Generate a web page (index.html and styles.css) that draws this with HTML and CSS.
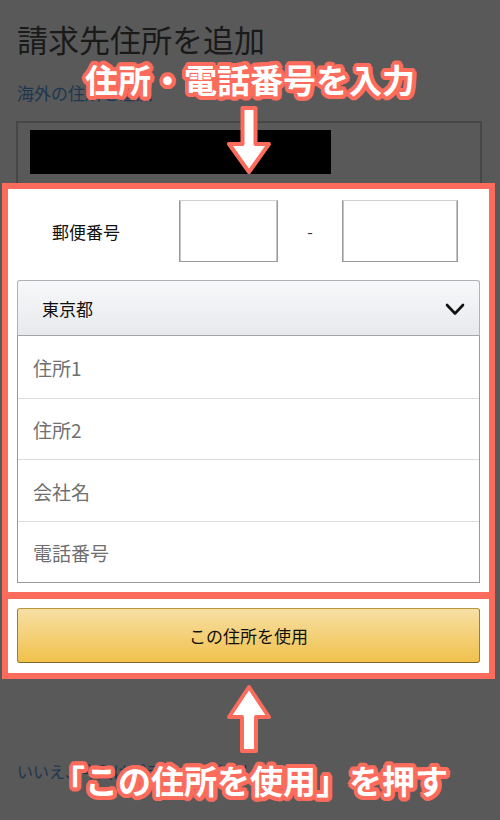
FILE: index.html
```html
<!DOCTYPE html>
<html lang="ja">
<head>
    <meta charset="UTF-8">
    <meta name="viewport" content="width=device-width, initial-scale=1.0">
    <title>請求先住所を追加</title>
    <link rel="stylesheet" href="styles.css">
</head>
<body>
    <div class="page">
        <h1 class="page-title">請求先住所を追加</h1>
        <a class="dim-link" href="#">海外の住所を追加</a>

        <div class="name-box">
            <div class="redacted"></div>
        </div>

        <div class="focus">
            <div class="focus-form">
                <div class="postal">
                    <span class="postal-label">郵便番号</span>
                    <div class="zip zip-a"></div>
                    <span class="dash">-</span>
                    <div class="zip zip-b"></div>
                </div>

                <div class="select">
                    <span>東京都</span>
                    <svg class="chevron" width="20" height="13" viewBox="0 0 20 13">
                        <polyline points="2,2 10,10.5 18,2" fill="none" stroke="#111" stroke-width="2.6" stroke-linecap="round" stroke-linejoin="round"/>
                    </svg>
                </div>

                <div class="field-list">
                    <div class="field">住所1</div>
                    <div class="field">住所2</div>
                    <div class="field">会社名</div>
                    <div class="field">電話番号</div>
                </div>
            </div>
            <div class="focus-action">
                <button class="submit">この住所を使用</button>
            </div>
        </div>

        <a class="dim-link bottom-link" href="#">いいえ、今回はプライムに登録しません</a>

        <!-- annotation overlay -->
        <div class="note note-top">住所・電話番号を入力</div>
        <svg class="arrow arrow-down" width="48" height="72" viewBox="0 0 48 72">
            <polygon points="17.5,4 30.5,4 30.5,40 44,40 24,68 4,40 17.5,40" fill="#fff" stroke="#fc6c5d" stroke-width="4" stroke-linejoin="round"/>
        </svg>
        <svg class="arrow arrow-up" width="48" height="72" viewBox="0 0 48 72">
            <polygon points="24,4 44,34 31,34 31,68 17,68 17,34 4,34" fill="#fff" stroke="#fc6c5d" stroke-width="4" stroke-linejoin="round"/>
        </svg>
        <div class="note note-bottom">「この住所を使用」を押す</div>
    </div>
</body>
</html>
```

FILE: styles.css
```css
body {
    margin: 0;
    background-color: #595959;
    font-family: "Noto Sans CJK JP", "Noto Sans", sans-serif;
    color: #1c1c1c;
}
.page {
    position: relative;
    height: 820px;
    padding: 19px 19px 0 17px;
    box-sizing: border-box;
    overflow: hidden;
}
.page-title {
    margin: 0;
    font-size: 31px;
    font-weight: 400;
    line-height: 40px;
    color: #1a1a1a;
}
.dim-link {
    display: block;
    margin-top: 22px;
    font-size: 17px;
    line-height: 24px;
    color: #1d3650;
    text-decoration: none;
}
.name-box {
    margin: 16px -1px 0;
    height: 62px;
    box-sizing: border-box;
    border: 2px solid #474747;
    border-bottom: none;
    padding: 7px 0 0 12px;
}
.redacted {
    width: 301px;
    height: 44px;
    background-color: #000;
}

/* highlighted part of the form */
.focus {
    margin: 0 -14px 0 -15px;
    border: 6px solid #fc6c5d;
    background-color: #fff;
}
.focus-form {
    padding: 11px 9px 9px;
}
.postal {
    display: flex;
    align-items: center;
    height: 62px;
}
.postal-label {
    width: 162px;
    padding-left: 35px;
    box-sizing: border-box;
    font-size: 17px;
    color: #111;
}
.zip {
    height: 62px;
    box-sizing: border-box;
    border: 1px solid #9a9a9a;
    border-top-color: #cfcfcf;
    box-shadow: inset 1px 0 0 #c4c4c4, inset -1px 0 0 #c4c4c4;
}
.zip-a {
    width: 99px;
}
.zip-b {
    width: 116px;
}
.dash {
    width: 64px;
    text-align: center;
    font-size: 16px;
    color: #333;
}
.select {
    display: flex;
    align-items: center;
    justify-content: space-between;
    margin-top: 18px;
    height: 56px;
    box-sizing: border-box;
    padding: 0 14px 0 24px;
    border: 1px solid #adb1b8;
    border-bottom-color: #a2a6ac;
    border-radius: 3px 3px 0 0;
    background: linear-gradient(#f7f8fa, #e7e9ec);
    font-size: 17px;
    color: #111;
}
.chevron {
    margin-top: 2px;
}
.field-list {
    border: 1px solid #9a9a9a;
    border-top: none;
}
.field {
    height: 61.5px;
    box-sizing: border-box;
    padding: 2px 0 0 15px;
    display: flex;
    align-items: center;
    font-size: 19px;
    color: #6f6f6f;
    border-top: 1px solid #dcdcdc;
}
.field:first-child {
    border-top: none;
}
.focus-action {
    border-top: 7px solid #fc6c5d;
    padding: 9px 9px 10px;
}
.submit {
    display: block;
    width: 100%;
    height: 55px;
    border: 1px solid #a88734;
    border-color: #b9973f #9c7e31 #846a29;
    border-radius: 3px;
    background: linear-gradient(#f7dfa5, #f0c14b);
    font-family: inherit;
    font-size: 17px;
    color: #111;
    cursor: pointer;
}
.bottom-link {
    margin-top: 81px;
    font-size: 16px;
    line-height: 22px;
}

/* annotations over the screenshot */
.note {
    position: absolute;
    left: 0;
    right: 0;
    text-align: center;
    font-size: 33px;
    font-weight: 700;
    line-height: 40px;
    color: #fff;
    text-shadow:
        4px 0 #fc6c5d, 3.7px 1.5px #fc6c5d, 2.8px 2.8px #fc6c5d, 1.5px 3.7px #fc6c5d,
        0 4px #fc6c5d, -1.5px 3.7px #fc6c5d, -2.8px 2.8px #fc6c5d, -3.7px 1.5px #fc6c5d,
        -4px 0 #fc6c5d, -3.7px -1.5px #fc6c5d, -2.8px -2.8px #fc6c5d, -1.5px -3.7px #fc6c5d,
        0 -4px #fc6c5d, 1.5px -3.7px #fc6c5d, 2.8px -2.8px #fc6c5d, 3.7px -1.5px #fc6c5d,
        2px 0 #fc6c5d, -2px 0 #fc6c5d, 0 2px #fc6c5d, 0 -2px #fc6c5d;
}
.note-top {
    top: 59px;
}
.note-bottom {
    top: 760px;
}
.arrow {
    position: absolute;
    left: 225px;
}
.arrow-down {
    top: 104px;
}
.arrow-up {
    top: 683px;
}
```
